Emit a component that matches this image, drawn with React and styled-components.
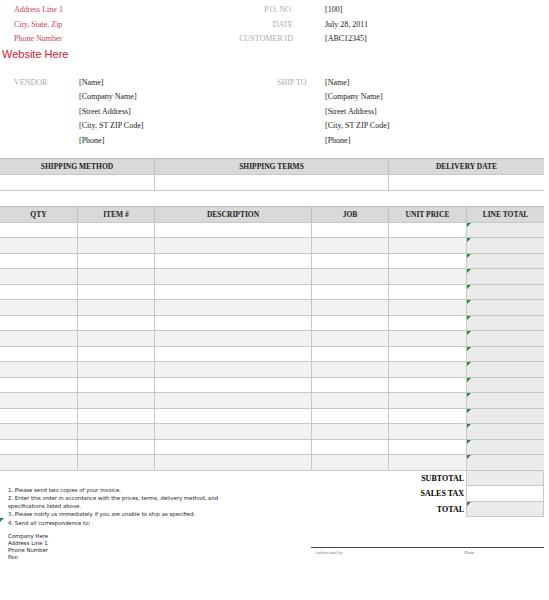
import React from "react";
import styled, { createGlobalStyle } from "styled-components";

const Global = createGlobalStyle`
  body { margin: 0; background: #fff; font-family: "Liberation Serif", serif; }
`;
const Page = styled.div`width: 549px; padding-top: 3px;`;
const Top = styled.div`display: grid; grid-template-columns: 210px 83px 1fr;`;
const Left = styled.div`display: flex; flex-direction: column;`;
const Col = styled.div`display: flex; flex-direction: column; padding-left: ${p => p.$pl || 0}px;`;
const RedLine = styled.div`color: #d0404a; font-size: 8px; height: 14.5px; line-height: 14.5px; padding-left: 14px;`;
const Website = styled.div`color: #d0202c; font-family: "Liberation Sans", Arial, sans-serif; font-size: 11px; padding-left: 2px; line-height: 14px;`;
const Label = styled.div`color: #aaa; font-size: 8px; text-align: ${p => p.$align || "right"}; height: 14.5px; line-height: 14.5px; padding-left: ${p => p.$pl || 0}px; white-space: nowrap;`;
const Val = styled.div`color: #222; font-size: 8px; height: 14.5px; line-height: 14.5px;`;
const Addr = styled.div`display: grid; grid-template-columns: 79px 198px 48px 1fr; margin-top: 15px;`;
const Grid = styled.div`
  display: grid; grid-template-columns: ${p => p.$cols}; width: 544px;
  margin-top: ${p => p.$mt}px; border-bottom: 1px solid #c8c8c8;
`;
const Head = styled.div`
  background: #d9d9d9; font-weight: bold; font-size: 7.5px; text-align: center;
  height: 15px; line-height: 15px; border-top: 1px solid #bbb; border-left: 1px solid #c0c0c0; color: #222;
  &:first-child { border-left: none; }
`;
const Cell = styled.div`
  position: relative; height: 14.5px; border-top: 1px solid #c8c8c8;
  border-left: ${p => (p.$first ? "none" : "1px solid #c8c8c8")};
  background: ${p => (p.$total ? "#ebebeb" : p.$alt ? "#f2f2f2" : "#fff")};
`;
const Flag = styled.span`
  position: absolute; left: 0; top: 0; width: 0; height: 0;
  border-top: 4px solid #1f8a2e; border-right: 4px solid transparent;
`;
const Footer = styled.div`display: grid; grid-template-columns: 311px 233px; width: 544px;`;
const Notes = styled.div`
  font-family: "DejaVu Sans", sans-serif; font-size: 5.4px; color: #222; line-height: 8.3px;
  padding: 15px 0 0 8px; position: relative;
`;
const Small = styled.div`line-height: 7px; margin-top: 6px;`;
const Totals = styled.div`display: grid; grid-template-columns: 155px 78px;`;
const TotLabel = styled.div`font-weight: bold; font-size: 8px; text-align: right; padding-right: 2px; height: 15.5px; line-height: 15.5px;`;
const TotCell = styled.div`position: relative; height: 14.5px; border: 1px solid #c8c8c8; border-top: none; background: ${p => (p.$g ? "#ebebeb" : "#fff")};`;
const Sign = styled.div`margin-top: 30px; border-top: 1px solid #444; display: flex; justify-content: space-between; padding: 2px 70px 0 4px;`;
const SignText = styled.span`font-style: italic; font-size: 5px; color: #777;`;

const cols = "77px 77px 157px 77px 78px 78px";
const vendor = ["[Name]", "[Company Name]", "[Street Address]", "[City, ST  ZIP Code]", "[Phone]"];
const meta = [["P.O. NO.", "[100]"], ["DATE", "July 28, 2011"], ["CUSTOMER ID", "[ABC12345]"]];

export default function App() {
  return (
    <Page>
      <Global />
      <Top>
        <Left>
          <RedLine>Address Line 1</RedLine>
          <RedLine>City, State, Zip</RedLine>
          <RedLine>Phone Number</RedLine>
          <Website>Website Here</Website>
        </Left>
        <Col>{meta.map(([l]) => <Label key={l}>{l}</Label>)}</Col>
        <Col $pl={32}>{meta.map(([l, v]) => <Val key={l}>{v}</Val>)}</Col>
      </Top>
      <Addr>
        <Col><Label $align="left" $pl={14}>VENDOR</Label></Col>
        <Col>{vendor.map(v => <Val key={v}>{v}</Val>)}</Col>
        <Col><Label $align="left">SHIP TO</Label></Col>
        <Col>{vendor.map(v => <Val key={v}>{v}</Val>)}</Col>
      </Addr>
      <Grid $cols="154px 234px 156px" $mt={10}>
        <Head>SHIPPING METHOD</Head><Head>SHIPPING TERMS</Head><Head>DELIVERY DATE</Head>
        <Cell $first /><Cell /><Cell />
      </Grid>
      <Grid $cols={cols} $mt={15}>
        {["QTY", "ITEM #", "DESCRIPTION", "JOB", "UNIT PRICE", "LINE TOTAL"].map(h => <Head key={h}>{h}</Head>)}
        {Array.from({ length: 16 }).map((_, r) =>
          [0, 1, 2, 3, 4, 5].map(c => (
            <Cell key={r + "-" + c} $first={c === 0} $alt={r % 2 === 1} $total={c === 5}>
              {c === 5 && <Flag />}
            </Cell>
          ))
        )}
      </Grid>
      <Footer>
        <Notes>
          <Flag style={{ top: 47 }} />
          1. Please send two copies of your invoice.<br />
          2. Enter this order in accordance with the prices, terms, delivery method, and<br />
          specifications listed above.<br />
          3. Please notify us immediately if you are unable to ship as specified.<br />
          4. Send all correspondence to:
          <Small>Company Here<br />Address Line 1<br />Phone Number<br />Fax:</Small>
        </Notes>
        <div>
          <Totals>
            <TotLabel>SUBTOTAL</TotLabel><TotCell $g />
            <TotLabel>SALES TAX</TotLabel><TotCell />
            <TotLabel>TOTAL</TotLabel><TotCell $g><Flag /></TotCell>
          </Totals>
          <Sign>
            <SignText>Authorized by</SignText>
            <SignText>Date</SignText>
          </Sign>
        </div>
      </Footer>
    </Page>
  );
}
